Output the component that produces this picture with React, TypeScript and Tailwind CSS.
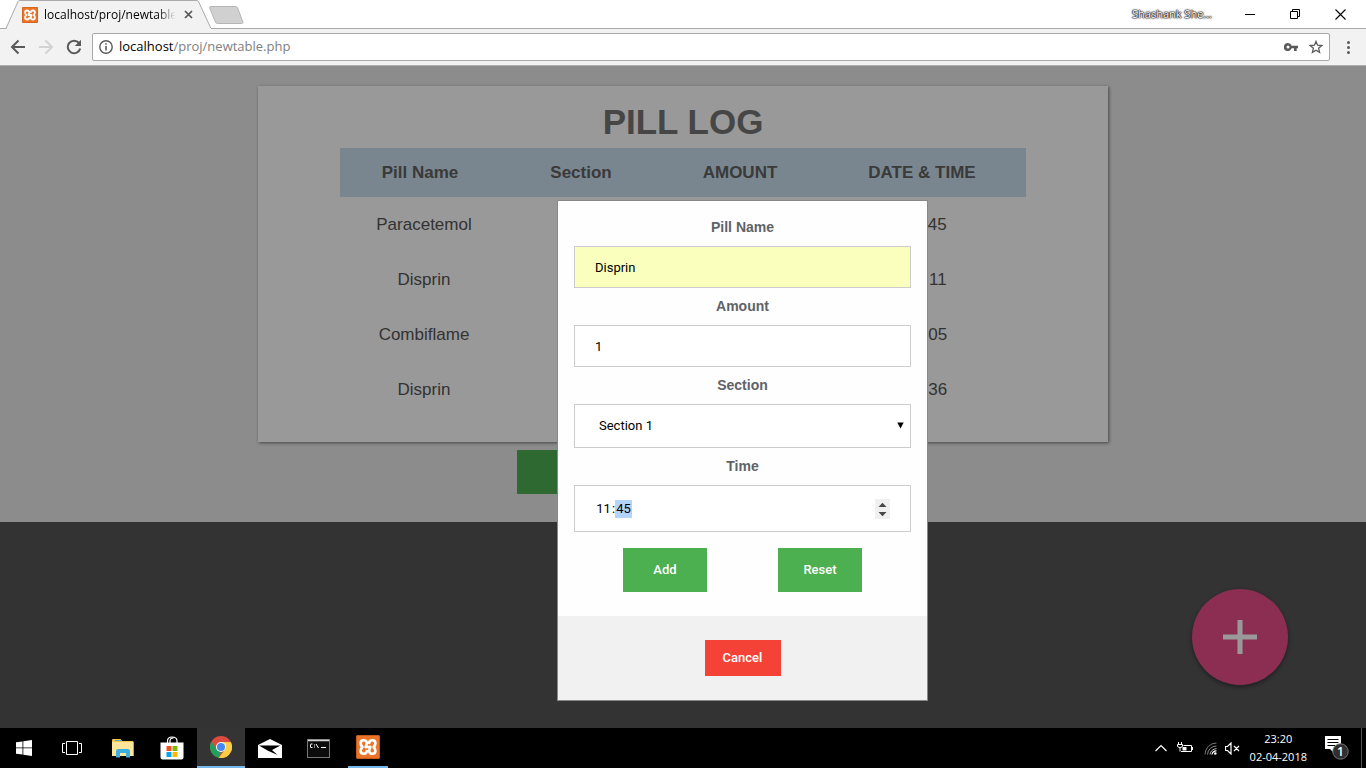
import { useState } from "react";
import type { ReactNode } from "react";

const pills = [
  { name: "Paracetemol", section: "", amount: "", time: "11:45" },
  { name: "Disprin", section: "", amount: "", time: "20:11" },
  { name: "Combiflame", section: "", amount: "", time: "22:05" },
  { name: "Disprin", section: "", amount: "", time: "22:36" },
];

function XamppIcon({ size }: { size: number }) {
  return (
    <svg width={size} height={size} viewBox="0 0 24 24" aria-hidden="true">
      <rect width="24" height="24" rx="2" fill="#ea7427" />
      <rect x="0.5" y="0.5" width="23" height="23" rx="1.5" fill="none" stroke="#c65a1c" />
      <path
        d="M9.600 12H14.400M9.600 12C10.300 10.500 10.800 9.400 10.800 8C10.800 4.300 4.600 4.300 4.600 8.200C4.600 9.900 5.400 10.900 6.400 12C5.400 13.100 4.600 14.100 4.600 15.800C4.600 19.700 10.800 19.700 10.800 16M14.400 12C13.700 13.500 13.200 14.600 13.200 16C13.200 19.700 19.400 19.700 19.400 15.800C19.400 14.100 18.600 13.100 17.600 12C18.600 10.900 19.400 9.900 19.400 8.200C19.400 4.300 13.200 4.300 13.200 8"
        fill="none"
        stroke="#fff"
        strokeWidth="2.7"
        strokeLinejoin="round"
        strokeLinecap="round"
      />
    </svg>
  );
}

function BrowserHeader() {
  return (
    <header className="shrink-0 font-['Open_Sans','Noto_Sans',sans-serif]">
      <div className="flex h-[29px] border-b border-[#a9a9a9] bg-white">
        <div className="relative ml-1.5 h-[29px] w-[206px] shrink-0">
          <svg className="absolute inset-0" width="206" height="29" viewBox="0 0 206 29" aria-hidden="true">
            <path d="M0 28.5L12 1.5Q12.500 .5 14 .5H190Q192 .5 192.500 1.500L205 28.500" fill="#f2f2f2" stroke="#a9a9a9" />
            <path d="M1 28.500H205" stroke="#f2f2f2" />
          </svg>
          <div className="relative flex h-[29px] items-center pl-4">
            <XamppIcon size={16} />
            <span className="ml-1.5 w-[134px] overflow-hidden whitespace-nowrap bg-linear-to-r from-black from-85% to-transparent to-98% bg-clip-text text-xs text-transparent">
              localhost/proj/newtable.php
            </span>
            <button aria-label="Close tab" className="ml-1.5">
              <svg width="9" height="9" viewBox="0 0 9 9">
                <path d="M1 1L8 8M8 1L1 8" stroke="#555" strokeWidth="1.700" />
              </svg>
            </button>
          </div>
        </div>
        <button aria-label="New tab" className="-ml-1 mt-[6px] self-start">
          <svg width="36" height="19" viewBox="0 0 36 19">
            <path d="M1.500 1.500Q1.500 .5 3 .5H27Q29 .5 29.500 1.500L35 16.500Q35 17.500 33.500 17.500H9.500Q8 17.500 7.500 16Z" fill="#d0d0d0" stroke="#b5b5b5" />
          </svg>
        </button>
        <div className="ml-auto flex items-center">
          <span className="mr-[33px] text-[11px] text-white [text-shadow:0_0_1px_#000,0_0_1px_#000,0_0_2px_#333,0_0_2px_#333]">
            Shashank She...
          </span>
          <div className="flex gap-[35px] pr-5">
            <button aria-label="Minimize">
              <svg width="10" height="10" viewBox="0 0 10 10">
                <path d="M0 5.500H10" stroke="#000" />
              </svg>
            </button>
            <button aria-label="Restore">
              <svg width="10" height="10" viewBox="0 0 10 10" fill="none" stroke="#000">
                <path d="M.5 2.500H7.500V9.500H.5ZM2.500 2.500V.5H9.500V7.500H7.500" />
              </svg>
            </button>
            <button aria-label="Close">
              <svg width="11" height="11" viewBox="0 0 11 11">
                <path d="M.5 .5L10.500 10.500M10.500 .5L.5 10.500" stroke="#000" strokeWidth="1.100" />
              </svg>
            </button>
          </div>
        </div>
      </div>
      <div className="flex h-[37px] items-center border-b border-[#b0b0b0] bg-[#f2f2f2] pl-2.5 pr-3">
        <nav className="flex gap-3">
          <button aria-label="Back">
            <svg width="16" height="16" viewBox="0 0 16 16" fill="none" stroke="#5a5a5a" strokeWidth="2">
              <path d="M15 8H2.500M8.500 1.500L2 8L8.500 14.500" />
            </svg>
          </button>
          <button aria-label="Forward">
            <svg width="16" height="16" viewBox="0 0 16 16" fill="none" stroke="#d2d2d2" strokeWidth="2">
              <path d="M1 8H13.500M7.500 1.500L14 8L7.500 14.500" />
            </svg>
          </button>
          <button aria-label="Reload">
            <svg width="16" height="16" viewBox="0 0 16 16" fill="none">
              <path d="M13 4A6.300 6.300 0 1 0 14.200 9.500" stroke="#5a5a5a" strokeWidth="2" />
              <path d="M15 .8V7H8.800Z" fill="#5a5a5a" />
            </svg>
          </button>
        </nav>
        <div className="ml-2.5 flex h-7 grow items-center rounded-xs border border-[#a9a9a9] bg-white px-1.5">
          <svg width="14" height="14" viewBox="0 0 14 14" fill="none" aria-hidden="true">
            <circle cx="7" cy="7" r="6.200" stroke="#5a5a5a" strokeWidth="1.400" />
            <path d="M7 6V10.500M7 3.200V4.800" stroke="#5a5a5a" strokeWidth="1.600" />
          </svg>
          <div className="ml-1.5 grow text-[13px] text-[#808080]">
            <span className="text-black">localhost</span>/proj/newtable.php
          </div>
          <svg width="14" height="8" viewBox="0 0 14 8" aria-hidden="true">
            <path d="M4 0A4 4 0 1 0 7.600 5.300H10V8H12.700V5.300H14V2.700H7.600A4 4 0 0 0 4 0ZM4 2.500A1.500 1.500 0 1 1 4 5.500A1.500 1.500 0 1 1 4 2.500Z" fill="#5a5a5a" fillRule="evenodd" />
          </svg>
          <svg className="ml-[11px]" width="14" height="14" viewBox="0 0 14 14" aria-hidden="true">
            <path d="M7 1.400L8.600 5.200L12.800 5.600L9.600 8.300L10.600 12.400L7 10.200L3.400 12.400L4.400 8.300L1.200 5.600L5.400 5.200Z" fill="none" stroke="#5a5a5a" strokeWidth="1.300" />
          </svg>
        </div>
        <button aria-label="Browser menu" className="ml-[17px] mr-1">
          <svg width="3" height="13" viewBox="0 0 3 13" fill="#5a5a5a">
            <circle cx="1.500" cy="1.500" r="1.500" />
            <circle cx="1.500" cy="6.500" r="1.500" />
            <circle cx="1.500" cy="11.500" r="1.500" />
          </svg>
        </button>
      </div>
    </header>
  );
}

function PillLog() {
  return (
    <div className="bg-[#e9e9e9] px-5 pb-7 pt-5">
      <section className="mx-auto max-w-[850px] bg-white px-[82px] pb-[25px] pt-4 shadow-[1px_1px_3px_rgba(0,0,0,0.5)]">
        <h1 className="text-center text-[35px] leading-10 font-bold text-[#757575]">PILL LOG</h1>
        <table className="mt-1.5 w-full table-fixed text-center text-[17px] text-[#555]">
          <colgroup>
            <col className="w-[168px]" />
            <col className="w-[154px]" />
            <col className="w-[164px]" />
            <col />
          </colgroup>
          <thead>
            <tr className="h-[49px] bg-[#cbdfee] text-[#616161]">
              <th className="pr-2">Pill Name</th>
              <th className="pr-2">Section</th>
              <th className="pr-2">AMOUNT</th>
              <th className="pr-2">DATE &amp; TIME</th>
            </tr>
          </thead>
          <tbody>
            {pills.map((pill, index) => (
              <tr key={index} className="h-[55px]">
                <td>{pill.name}</td>
                <td>{pill.section}</td>
                <td>{pill.amount}</td>
                <td>{pill.time}</td>
              </tr>
            ))}
          </tbody>
        </table>
      </section>
      <button aria-label="Refresh log" className="mx-auto mt-2 block h-11 w-[332px] bg-[#4caf50]" />
    </div>
  );
}

const labelClass = "my-2 text-center text-sm leading-[21px] font-bold text-[#5f6368]";

function AddPillDialog() {
  const [name, setName] = useState("Disprin");
  const [amount, setAmount] = useState("1");
  const [hour, setHour] = useState("11");
  const [minute, setMinute] = useState("45");

  const step = (delta: number) =>
    setMinute(String((Number(minute) + delta + 60) % 60).padStart(2, "0"));

  return (
    <div role="dialog" aria-label="Add pill" className="w-[371px] border border-[#888] bg-[#fefefe]">
      <form className="flex flex-col px-4 pb-6 pt-2 text-[13px]" onSubmit={(e) => e.preventDefault()}>
        <label htmlFor="pill-name" className={labelClass}>Pill Name</label>
        <input
          id="pill-name"
          value={name}
          onChange={(e) => setName(e.target.value)}
          className="h-[42px] border border-[#ccc] bg-[#faffbd] px-5 font-[Roboto,sans-serif] text-black"
        />
        <label htmlFor="amount" className={labelClass}>Amount</label>
        <input
          id="amount"
          value={amount}
          onChange={(e) => setAmount(e.target.value)}
          className="h-[42px] border border-[#ccc] bg-white px-5 font-[Roboto,sans-serif] text-black"
        />
        <label htmlFor="section" className={labelClass}>Section</label>
        <div className="relative">
          <select
            id="section"
            className="block h-11 w-full appearance-none border border-[#ccc] bg-white px-6 font-[Roboto,sans-serif] text-black"
          >
            <option>Section 1</option>
            <option>Section 2</option>
            <option>Section 3</option>
          </select>
          <svg className="pointer-events-none absolute right-[7px] top-[18px]" width="7" height="7" viewBox="0 0 7 7" aria-hidden="true">
            <path d="M.3 .5H6.700L3.500 6.500Z" fill="#000" />
          </svg>
        </div>
        <label htmlFor="hour" className={labelClass}>Time</label>
        <div className="flex h-[47px] items-center border border-[#ccc] bg-white px-5 font-[Roboto,sans-serif] text-black">
          <input
            id="hour"
            value={hour}
            onChange={(e) => setHour(e.target.value)}
            className="w-[17px] text-center"
          />
          <span className="w-[3px]">:</span>
          <input
            aria-label="Minutes"
            value={minute}
            onChange={(e) => setMinute(e.target.value)}
            className="h-[18px] w-[17px] bg-[#b3d4ff] text-center"
          />
          <div className="ml-auto flex flex-col bg-[#f0f0f0]">
            <button type="button" aria-label="Increase" onClick={() => step(1)}>
              <svg width="15" height="10" viewBox="0 0 15 10">
                <path d="M3.500 8L7.500 3.700L11.500 8Z" fill="#484848" />
              </svg>
            </button>
            <button type="button" aria-label="Decrease" onClick={() => step(-1)}>
              <svg width="15" height="10" viewBox="0 0 15 10">
                <path d="M3.500 3L7.500 7.300L11.500 3Z" fill="#484848" />
              </svg>
            </button>
          </div>
        </div>
        <div className="mt-4 flex justify-center gap-[71px] font-[Roboto,sans-serif] font-medium text-white">
          <button type="submit" className="h-11 w-[84px] bg-[#4caf50]">Add</button>
          <button type="reset" className="h-11 w-[84px] bg-[#4caf50]">Reset</button>
        </div>
      </form>
      <div className="flex justify-center bg-[#f1f1f1] py-6">
        <button className="h-9 w-[76px] bg-[#f44336] font-[Roboto,sans-serif] text-[13px] font-medium text-white">
          Cancel
        </button>
      </div>
    </div>
  );
}

function TaskButton({ label, className = "", children }: { label: string; className?: string; children: ReactNode }) {
  return (
    <button aria-label={label} className={`flex h-10 w-12 items-center justify-center ${className}`}>
      {children}
    </button>
  );
}

function Taskbar() {
  return (
    <footer className="flex h-10 shrink-0 items-center bg-black font-['Open_Sans','Noto_Sans',sans-serif] text-white">
      <TaskButton label="Start">
        <svg width="16" height="16" viewBox="0 0 16 16" fill="#fff">
          <path d="M0 2.300L6.500 1.400V7.500H0ZM7.300 1.300L16 0V7.500H7.300ZM0 8.300H6.500V14.600L0 13.700ZM7.300 8.300H16V16L7.300 14.700Z" />
        </svg>
      </TaskButton>
      <TaskButton label="Task view">
        <svg width="20" height="14" viewBox="0 0 20 14" fill="none" stroke="#fff">
          <path d="M4.500 .5H15.500V13.500H4.500ZM3 2.500H.5V11.500H3M17 2.500H19.500V11.500H17" />
        </svg>
      </TaskButton>
      <div className="flex gap-px pl-[3px]">
        <TaskButton label="File Explorer">
          <svg width="22" height="19" viewBox="0 0 22 19">
            <path d="M0 1Q0 0 1 0H8Q9 0 9.500 1L10 2H20.500Q21.500 2 21.500 3V17H0Z" fill="#f3c64d" />
            <path d="M0 3H21.500V17H0Z" fill="#ffe59a" />
            <path d="M3 1.500H9" stroke="#4aa9d8" />
            <path d="M4 18.500V12Q4 10 6 10H16Q18 10 18 12V18.500H14V14H8V18.500Z" fill="#3bb0e0" />
          </svg>
        </TaskButton>
        <TaskButton label="Store">
          <svg width="24" height="24" viewBox="0 0 24 24">
            <path d="M7.500 7V5Q7.500 1 12 1Q17 1 17 5V7M10 7V5Q10 2 13.500 2" fill="none" stroke="#fff" strokeWidth="1.200" />
            <path d="M.5 6.500H23.500V21.500Q23.500 23.500 21.500 23.500H2.500Q.5 23.500 .5 21.500Z" fill="#fff" />
            <path d="M6.500 10H11.500V15H6.500Z" fill="#f25022" />
            <path d="M12.500 10H17.500V15H12.500Z" fill="#7fba00" />
            <path d="M6.500 16H11.500V21H6.500Z" fill="#00a4ef" />
            <path d="M12.500 16H17.500V21H12.500Z" fill="#ffb900" />
          </svg>
        </TaskButton>
        <TaskButton label="Chrome" className="border-b-2 border-[#76b9ed] bg-[#343434]">
          <svg width="22" height="22" viewBox="0 0 22 22">
            <circle cx="11" cy="11" r="11" fill="#dd4b3e" />
            <path d="M1.500 5.500L6.700 13.500L11 16L8.800 21.800A11 11 0 0 1 1.500 5.500Z" fill="#1fa15d" />
            <path d="M11 6H20.800A11 11 0 0 1 8.800 21.800L15.500 13Z" fill="#fdce43" />
            <circle cx="11" cy="11" r="5" fill="#fff" />
            <circle cx="11" cy="11" r="4" fill="#4587f3" />
          </svg>
        </TaskButton>
        <TaskButton label="Mail">
          <svg width="24" height="19" viewBox="0 0 24 19">
            <path d="M0 6L12 0L24 6V19H0Z" fill="#fff" />
            <path d="M1 6.500H22.500L14 11L19.500 16L9.500 11.500Z" fill="#000" />
          </svg>
        </TaskButton>
        <TaskButton label="Command Prompt">
          <svg width="24" height="19" viewBox="0 0 24 19">
            <rect x=".5" y=".5" width="22" height="18" fill="#0c0c0c" stroke="#777" />
            <path d="M1 1.500H22" stroke="#d5d5d5" strokeWidth="1.500" />
            <path d="M5.500 5H4Q3.500 5 3.500 6V8Q3.500 8.500 4 8.500H5.500M7.500 5.500V6.500M7.500 7.500V8.500M9 5L11.500 9M14 8.500H19" fill="none" stroke="#fff" />
          </svg>
        </TaskButton>
        <div className="flex w-12 justify-center">
          <button aria-label="XAMPP" className="flex h-10 w-10 items-center justify-center border-b-2 border-[#76b9ed]">
            <XamppIcon size={24} />
          </button>
        </div>
      </div>
      <div className="ml-auto flex items-center">
        <svg width="12" height="8" viewBox="0 0 12 8" fill="none" stroke="#fff" strokeWidth="1.200" aria-hidden="true">
          <path d="M.5 7L6 1.500L11.500 7" />
        </svg>
        <svg className="ml-2.5" width="16" height="12" viewBox="0 0 16 12" fill="none" stroke="#fff" aria-hidden="true">
          <path d="M6.500 3.500H14.500V9.500H4M15.500 5V8M1.500 0V2.500M4.500 0V2.500M.5 2.500H5.500V4Q5.500 5.500 3 5.500Q.5 5.500 .5 4ZM3 5.500V9.500" />
          <path d="M5.500 5H9.500V8.500H5.500Z" fill="#fff" stroke="none" />
        </svg>
        <svg className="ml-[11px]" width="13" height="13" viewBox="0 0 13 13" fill="none" aria-hidden="true">
          <path d="M1 12.500A11.500 11.500 0 0 1 12.500 1" stroke="#777" />
          <path d="M3.500 12.500A9 9 0 0 1 12.500 4" stroke="#888" />
          <path d="M6 12.500A6.500 6.500 0 0 1 12.500 6.700" stroke="#bbb" />
          <path d="M8 12.500A4 4 0 0 1 12.500 9" stroke="#fff" strokeWidth="1.200" />
          <circle cx="11.300" cy="11.500" r="1.300" fill="#fff" />
        </svg>
        <svg className="ml-2" width="15" height="13" viewBox="0 0 15 13" fill="none" stroke="#fff" aria-hidden="true">
          <path d="M.5 4.500H2.500L6 1V12L2.500 8.500H.5ZM9 4L14 9M14 4L9 9" strokeWidth="1.200" />
        </svg>
        <div className="ml-2.5 text-center text-[11px] leading-[18px]">
          <div>23:20</div>
          <div>02-04-2018</div>
        </div>
        <button aria-label="Notifications" className="relative ml-[18px] h-6 w-6">
          <svg width="24" height="24" viewBox="0 0 24 24">
            <path d="M0 0H16V13H8V16L5 13H0Z" fill="#fff" />
            <path d="M2.500 3.500H13.500M2.500 6.500H13.500M2.500 9.500H10" stroke="#000" />
            <circle cx="15.500" cy="15.500" r="7.700" fill="#2f2f2f" stroke="#777" />
          </svg>
          <span className="absolute left-3 top-2 text-xs leading-4 font-semibold">1</span>
        </button>
        <div className="ml-3 mr-1 h-10 w-px bg-[#555]" />
      </div>
    </footer>
  );
}

export default function App() {
  return (
    <div className="flex min-h-screen flex-col font-['Liberation_Sans',Arial,sans-serif]">
      <BrowserHeader />
      <main className="relative grow bg-[#555]">
        <PillLog />
        <button
          aria-label="Add a pill"
          className="absolute bottom-[43px] right-[78px] flex size-24 items-center justify-center rounded-full bg-[#e84e89] shadow-[0_2px_4px_rgba(0,0,0,0.4)]"
        >
          <svg width="34" height="34" viewBox="0 0 34 34" aria-hidden="true">
            <path d="M17 0V34M0 17H34" stroke="#fff" strokeWidth="5" />
          </svg>
        </button>
        <div className="absolute inset-0 flex items-start justify-center bg-black/40 pl-[119px] pt-[134px]">
          <AddPillDialog />
        </div>
      </main>
      <Taskbar />
    </div>
  );
}
